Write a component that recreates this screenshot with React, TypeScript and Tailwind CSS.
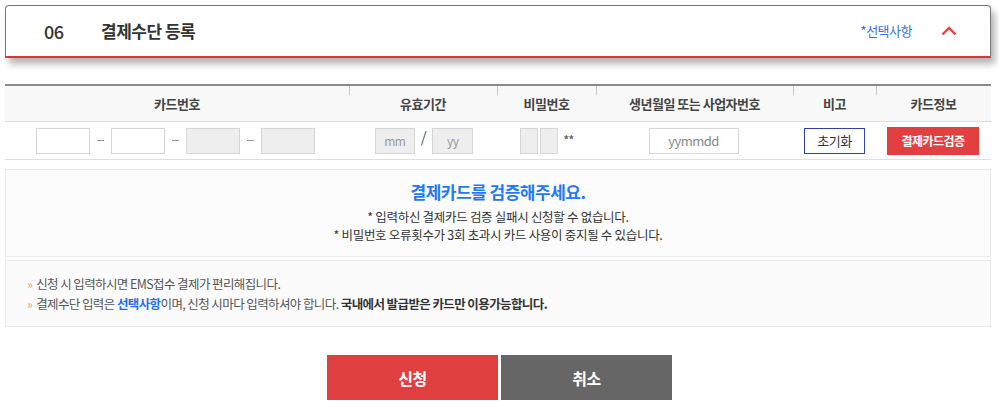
import React from 'react';

const font = { fontFamily: '"Noto Sans CJK KR", "Noto Sans", sans-serif' };

function HeaderCell({ label, divider }: { label: string; divider?: boolean }) {
  return (
    <div className="relative flex items-center justify-center text-[13px] font-bold text-[#444]">
      {divider && <span className="absolute left-0 top-0 h-[9px] w-px bg-[#c8c8c8]" />}
      {label}
    </div>
  );
}

function Dash() {
  return <span className="h-px w-[7px] bg-[#999]" />;
}

export default function App() {
  return (
    <div className="w-[999px] bg-white pt-[5px] pb-[8px] tracking-[-0.5px]" style={font}>
      {/* section header */}
      <div className="ml-[5px] flex h-[53px] w-[986px] items-center rounded-t-[4px] border border-b-2 border-[#777] border-b-[#e0303c] bg-white pl-[38px] pr-[33px] shadow-[4px_6px_7px_rgba(0,0,0,0.3)]">
        <span className="w-[57px] text-[18px] font-medium text-[#333]">06</span>
        <span className="text-[17px] font-bold text-[#333]">결제수단 등록</span>
        <span className="ml-auto text-[13px] text-[#3b6fe8]">*선택사항</span>
        <svg className="ml-[29px]" width="16" height="10" viewBox="0 0 16 10" fill="none">
          <path d="M1.5 8.5 L8 2 L14.5 8.5" stroke="#ef3d3d" strokeWidth="2.4" />
        </svg>
      </div>

      {/* card table */}
      <div className="ml-[5px] mt-[26px] w-[986px] border-t-2 border-[#8a8a8a]">
        <div className="grid h-[36px] grid-cols-[344px_148px_99px_197px_83px_115px] border-b border-[#dedede] bg-[#f8f8f8]">
          <HeaderCell label="카드번호" />
          <HeaderCell label="유효기간" divider />
          <HeaderCell label="비밀번호" divider />
          <HeaderCell label="생년월일 또는 사업자번호" divider />
          <HeaderCell label="비고" divider />
          <HeaderCell label="카드정보" divider />
        </div>
        <div className="grid h-[38px] grid-cols-[344px_148px_99px_197px_83px_115px] border-b border-[#dedede]">
          <div className="flex items-center justify-center gap-[7px] pr-[3px]">
            <input className="h-[26px] w-[54px] border border-[#d6d6d6] bg-white outline-none" />
            <Dash />
            <input className="h-[26px] w-[54px] border border-[#d6d6d6] bg-white outline-none" />
            <Dash />
            <div className="h-[26px] w-[54px] border border-[#d6d6d6] bg-[#eeeeee]" />
            <Dash />
            <div className="h-[26px] w-[54px] border border-[#d6d6d6] bg-[#eeeeee]" />
          </div>
          <div className="flex items-center justify-center gap-[6px] pl-[2px]">
            <div className="flex h-[26px] w-[40px] items-center justify-center border border-[#d6d6d6] bg-[#eeeeee] text-[12px] text-[#999]">mm</div>
            <span className="pb-[6px] text-[15px] text-[#555]">/</span>
            <div className="flex h-[26px] w-[41px] items-center justify-center border border-[#d6d6d6] bg-[#eeeeee] text-[12px] text-[#999]">yy</div>
          </div>
          <div className="flex items-center justify-center gap-[2px] pl-[1px]">
            <div className="h-[26px] w-[18px] border border-[#d6d6d6] bg-[#eeeeee]" />
            <div className="h-[26px] w-[18px] border border-[#d6d6d6] bg-[#eeeeee]" />
            <span className="ml-[3px] pb-[2px] text-[11px] font-bold text-[#666]">**</span>
          </div>
          <div className="flex items-center justify-center pr-[2px]">
            <div className="flex h-[26px] w-[90px] items-center justify-center border border-[#d6d6d6] bg-white text-[13px] text-[#888]">yymmdd</div>
          </div>
          <div className="flex items-center justify-center">
            <button className="flex h-[26px] w-[61px] items-center justify-center border border-[#3442a8] bg-white text-[13px] text-[#333]">초기화</button>
          </div>
          <div className="flex items-center justify-center pr-[1px]">
            <button className="flex h-[28px] w-[92px] items-center justify-center bg-[#e24040] text-[12px] font-bold text-white">결제카드검증</button>
          </div>
        </div>
      </div>

      {/* notice */}
      <div className="ml-[5px] mt-[9px] flex h-[88px] w-[986px] flex-col items-center border border-[#e8e8e8] bg-[#fcfcfc] pt-[10px]">
        <p className="text-[17px] font-bold leading-[24px] text-[#1f7af3]">결제카드를 검증해주세요.</p>
        <p className="mt-[4px] text-center text-[12.5px] leading-[18px] tracking-[-0.3px] text-[#333]">
          * 입력하신 결제카드 검증 실패시 신청할 수 없습니다.
          <br />
          * 비밀번호 오류횟수가 3회 초과시 카드 사용이 중지될 수 있습니다.
        </p>
      </div>

      <div className="ml-[5px] mt-[3px] flex h-[67px] w-[986px] flex-col justify-center gap-[2px] border border-[#e8e8e8] bg-[#fbfbfb] pl-[21px] text-[12.5px] leading-[18px] tracking-[-0.6px] text-[#555]">
        <p>
          <span className="mr-[4px] text-[12px] text-[#d4a47c]">»</span>신청 시 입력하시면 EMS접수 결제가 편리해집니다.
        </p>
        <p>
          <span className="mr-[4px] text-[12px] text-[#d4a47c]">»</span>결제수단 입력은{' '}
          <span className="font-bold text-[#1f6ff0]">선택사항</span>이며, 신청 시마다 입력하셔야 합니다.{' '}
          <span className="font-bold text-[#333]">국내에서 발급받은 카드만 이용가능합니다.</span>
        </p>
      </div>

      {/* actions */}
      <div className="mt-[28px] flex justify-center gap-[3px]">
        <button className="h-[45px] w-[171px] bg-[#e03f3f] text-[16px] font-bold text-white">신청</button>
        <button className="h-[45px] w-[171px] bg-[#666666] text-[16px] font-bold text-white">취소</button>
      </div>
    </div>
  );
}
